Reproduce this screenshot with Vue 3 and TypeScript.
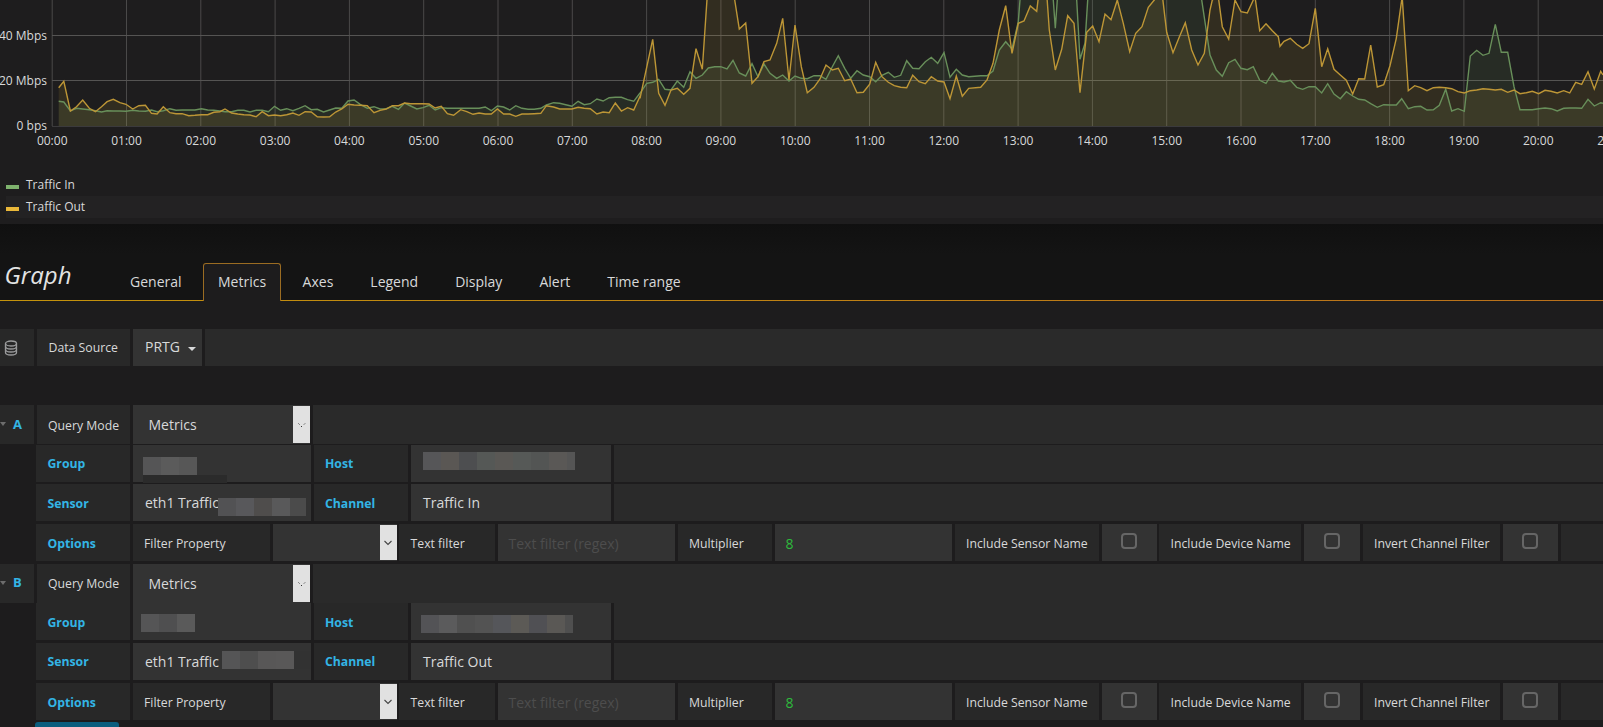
<script setup lang="ts">
type Pt = [number, number]

function parse(src: string, x0: number, sx: number, from: number, to: number): Pt[] {
  return src
    .trim()
    .split(/\s+/)
    .map((p) => {
      const [x, y] = p.split(',').map(Number)
      return [x0 + x / sx, y / 3] as Pt
    })
    .filter((p) => p[0] >= from && p[0] < to)
}

const orangeSrc = [
  '115,263 125,244 138,333 150,320 162,300 175,325 187,335 199,320 210,305 222,298 235,308 247,313 260,327 272,317 285,316 297,340 308,342 320,320 333,338 345,341 357,341 370,347 382,346 395,344 407,344 419,337 431,335 441,327 454,339 466,342 478,344 490,345 502,350 514,335 526,347 538,345 550,347 562,344 574,339 586,346 598,335 610,336 622,350 634,351 646,350 658,336 670,327 682,313 694,315 706,316 720,317 733,338 745,331 757,327 769,317 781,317 793,309 805,311 817,311 829,311 841,312 853,324 865,319 877,341 889,346 903,329 915,335 927,343 939,339 951,342 963,342 975,327 987,342 999,342 1011,349 1023,342 1035,342 1047,341 1060,340 1071,317 1085,321 1097,327 1109,327 1121,327 1133,322 1145,325 1157,326 1170,342 1182,336 1194,338 1206,309 1218,333 1230,323 1242,330 1254,290',
  '0,295 38,118 56,280 75,316 93,270 112,265 131,283 150,265 168,146 187,208 205,-60 270,-60 284,0 298,87 317,69 336,250 354,230 372,185 390,180 410,130 428,55 447,240 465,75 484,200 502,278 522,262 540,237 558,195 577,210 595,205 614,242 632,237 651,278 670,277 689,253 707,187 726,230 745,247 763,257 782,262 800,263 818,226 837,245 856,251 874,230 893,243 912,246 930,296 949,228 967,289 986,265 1005,278 1020,265',
  '44,278 62,262 81,240 99,190 118,90 137,17 156,160 175,70 192,63 211,18 230,34 240,-50 260,-20 268,90 286,210 305,148 323,47 342,70 360,278 380,97 398,78 417,125 435,42 453,59 472,0 490,70 509,155 527,100 546,80 565,22 583,0 605,-30 620,97 639,158 657,113 676,68 695,150 714,195 733,160 750,30 757,0 775,-10 787,80 806,117 825,0 843,35 862,39 880,0 885,-10 899,92 918,71 937,92 955,110 974,125 992,115 1011,133',
  '0,139 12,124 31,115 50,133 68,145 87,131 106,25 125,200 143,146 162,208 181,225 199,241 218,282 236,236 254,237 272,135 292,261 311,254 330,197 349,115 365,0 367,-5 385,272 404,257 422,263 441,272 460,263 478,262 497,263 515,266 534,275 553,279 571,272 590,270 609,266 627,268 646,270 664,268 683,277 702,270 720,281 739,278 757,274 776,281 795,271 813,274 832,279 851,272 869,279 887,247 905,253 924,215 943,267 962,214 969,225'
]

const greenSrc = [
  '115,304 125,306 138,333 150,325 162,327 175,329 187,332 199,336 210,332 222,333 235,333 247,334 260,331 272,333 285,334 297,330 308,335 320,332 333,326 345,331 357,330 370,330 382,330 395,326 407,330 419,331 431,333 441,335 454,335 466,331 478,331 490,336 502,331 514,331 526,335 538,319 550,331 562,326 574,332 586,325 598,317 610,329 622,328 634,336 646,330 658,324 670,325 682,303 694,300 706,313 720,325 733,320 745,327 757,326 769,319 781,328 793,309 805,318 817,327 829,323 841,316 853,330 865,323 877,325 889,325 903,325 915,325 927,325 939,325 951,321 963,332 975,318 987,321 999,330 1011,317 1023,325 1035,328 1047,328 1060,325 1071,315 1085,308 1097,310 1109,314 1121,319 1133,304 1145,314 1157,311 1170,297 1182,303 1194,293 1206,292 1218,292 1230,299 1242,304 1254,280',
  '0,280 20,250 38,247 56,238 75,268 93,270 112,243 131,262 150,215 168,235 187,225 205,204 224,200 242,200 261,207 279,181 298,219 317,228 336,191 354,230 372,192 390,220 410,235 428,225 447,243 465,228 484,235 502,236 522,227 540,227 558,238 577,200 595,167 614,205 632,235 651,212 670,225 689,230 707,245 726,226 745,217 763,232 782,226 800,182 818,205 837,206 856,185 874,172 893,190 912,158 930,232 949,208 967,225 986,230 1005,228 1020,227',
  '44,227 62,227 81,227 99,213 118,150 137,125 156,147 175,65 180,0 184,-40 270,-40 280,0 286,85 292,0 296,-30 340,-30 350,0 360,178 375,130 383,0 386,-30 720,-30 725,0 740,100 750,165 769,210 787,229 806,188 825,178 843,205 862,209 880,200 899,241 918,250 937,220 955,243 974,246 992,241 1011,261',
  '0,244 12,246 31,241 50,262 68,268 87,260 106,260 125,279 143,251 162,282 181,296 199,275 218,288 236,298 254,300 272,311 292,322 311,314 330,315 349,315 365,296 385,326 404,320 422,319 441,330 460,329 478,316 497,268 515,333 534,326 553,334 571,168 590,151 609,166 627,160 646,73 664,157 683,157 702,260 720,329 739,329 757,329 776,326 795,324 813,326 832,333 851,325 869,324 887,324 905,325 924,298 943,318 962,308 969,310'
]

const segs: [number, number, number, number][] = [
  [0, 1.96, 0, 640],
  [640, 3, 640, 975],
  [960, 3, 975, 1280],
  [1280, 3, 1280, 1700]
]

function build(src: string[]): Pt[] {
  return src.flatMap((s, i) => parse(s, segs[i][0], segs[i][1], segs[i][2], segs[i][3]))
}

function line(pts: Pt[]): string {
  return pts.map((p) => `${p[0].toFixed(1)},${p[1].toFixed(1)}`).join(' ')
}

function area(pts: Pt[]): string {
  const first = pts[0][0].toFixed(1)
  const last = pts[pts.length - 1][0].toFixed(1)
  return `${first},126 ${line(pts)} ${last},126`
}

const baseY = 126
const green = build(greenSrc)
const orange = build(orangeSrc)

const hours = Array.from({ length: 22 }, (_, h) => ({
  x: 52.2 + 74.3 * h,
  label: `${String(h).padStart(2, '0')}:00`
}))

const yTicks = [
  { y: 35.5, label: '40 Mbps' },
  { y: 80.5, label: '20 Mbps' },
  { y: 126, label: '0 bps' }
]

const tabs = ['General', 'Metrics', 'Axes', 'Legend', 'Display', 'Alert', 'Time range']

interface Blur {
  left: number
  top: number
  width: number
  colors: string[]
}

interface Query {
  letter: string
  group: Blur
  host: Blur
  sensor: Blur
  channel: string
  strip: boolean
}

const queries: Query[] = [
  {
    letter: 'A',
    strip: true,
    channel: 'Traffic In',
    group: { left: 10, top: 12, width: 54, colors: ['#555556', '#5b5b5b', '#575757'] },
    host: {
      left: 12,
      top: 7,
      width: 152,
      colors: ['#565658', '#5a5754', '#4d4e50', '#555856', '#5a5855', '#565957', '#535554', '#5a5856', '#555']
    },
    sensor: { left: 85, top: 14, width: 88, colors: ['#525254', '#58585b', '#4f4d4c', '#59595a', '#4b4b4b'] }
  },
  {
    letter: 'B',
    strip: false,
    channel: 'Traffic Out',
    group: { left: 8, top: 11, width: 54, colors: ['#555556', '#4f4f50', '#5a5a5a'] },
    host: {
      left: 10,
      top: 12,
      width: 152,
      colors: ['#535356', '#5b5b5c', '#505050', '#535353', '#55565a', '#5c5a56', '#505054', '#5a5855', '#4f4f4f']
    },
    sensor: { left: 89, top: 8, width: 89, colors: ['#555556', '#4e4e4e', '#585757', '#595858', '#323232'] }
  }
]

function at(b: Blur) {
  return { left: `${b.left}px`, top: `${b.top}px`, width: `${b.width}px` }
}
</script>

<template>
  <div class="page">
    <section class="panel">
      <svg class="chart" width="1603" height="150" viewBox="0 0 1603 150">
        <line
          v-for="h in hours"
          :key="h.label"
          :x1="h.x"
          :x2="h.x"
          y1="0"
          :y2="baseY"
          class="grid-v"
        />
        <line x1="52" x2="1603" y1="35.5" y2="35.5" class="grid-h" />
        <line x1="52" x2="1603" y1="80.5" y2="80.5" class="grid-h" />
        <polygon :points="area(green)" class="fill-green" />
        <polygon :points="area(orange)" class="fill-orange" />
        <polyline :points="line(green)" class="line-green" />
        <polyline :points="line(orange)" class="line-orange" />
        <line x1="52" x2="1603" y1="126.5" y2="126.5" class="axis" />
        <text v-for="t in yTicks" :key="t.label" x="47" :y="t.y + 4" text-anchor="end" class="tick">{{ t.label }}</text>
        <text v-for="h in hours" :key="h.label + 't'" :x="h.x" y="145" text-anchor="middle" class="tick">{{ h.label }}</text>
      </svg>
      <div class="legend">
        <div class="legend-row">
          <span class="swatch swatch-green"></span>
          <span class="legend-name">Traffic In</span>
        </div>
        <div class="legend-row legend-alt">
          <span class="swatch swatch-orange"></span>
          <span class="legend-name">Traffic Out</span>
        </div>
      </div>
    </section>

    <header class="edit-head">
      <h2 class="title">Graph</h2>
      <nav class="tabs">
        <a v-for="t in tabs" :key="t" class="tab" :class="{ active: t === 'Metrics' }">{{ t }}</a>
      </nav>
    </header>

    <main class="editor">
      <div class="row row-ds">
        <div class="cell icon-cell">
          <svg width="14" height="16" viewBox="0 0 14 16" class="db">
            <ellipse cx="7" cy="3.500" rx="5.500" ry="2.500" />
            <path d="M1.500 3.500v9c0 1.400 2.500 2.500 5.500 2.500s5.500-1.100 5.500-2.500v-9" />
            <path d="M1.500 6.500c0 1.400 2.500 2.500 5.500 2.500s5.500-1.100 5.500-2.500" />
            <path d="M1.500 9.500c0 1.400 2.500 2.500 5.500 2.500s5.500-1.100 5.500-2.500" />
          </svg>
        </div>
        <div class="cell label plain">Data Source</div>
        <div class="cell input prtg">PRTG<span class="caret"></span></div>
        <div class="cell filler"></div>
      </div>

      <div v-for="q in queries" :key="q.letter" class="query">
        <div class="row row-query">
          <div class="cell letter-cell">
            <span class="collapse"></span>
            <span class="letter">{{ q.letter }}</span>
          </div>
          <div class="cell label">Query Mode</div>
          <div class="cell input select mode">
            <span>Metrics</span>
            <span class="sel-btn">
              <svg width="10" height="8" viewBox="0 0 10 8">
                <path d="M1.500 2.500l1 1M4 5l1 1M8 2.500l-1 1" class="chev" />
              </svg>
            </span>
          </div>
          <div class="cell filler"></div>
        </div>

        <div class="row row-target">
          <div class="cell label key">Group</div>
          <div class="cell input value">
            <span class="blur" :style="at(q.group)">
              <i v-for="(c, i) in q.group.colors" :key="i" :style="{ background: c }"></i>
            </span>
            <span v-if="q.strip" class="strip"></span>
          </div>
          <div class="cell label key">Host</div>
          <div class="cell input value">
            <span class="blur" :style="at(q.host)">
              <i v-for="(c, i) in q.host.colors" :key="i" :style="{ background: c }"></i>
            </span>
          </div>
          <div class="cell filler"></div>
        </div>

        <div class="row row-target">
          <div class="cell label key">Sensor</div>
          <div class="cell input value">
            eth1 Traffic
            <span class="blur" :style="at(q.sensor)">
              <i v-for="(c, i) in q.sensor.colors" :key="i" :style="{ background: c }"></i>
            </span>
          </div>
          <div class="cell label key">Channel</div>
          <div class="cell input value">{{ q.channel }}</div>
          <div class="cell filler"></div>
        </div>

        <div class="row row-options">
          <div class="cell label key">Options</div>
          <div class="cell label">Filter Property</div>
          <div class="cell input select">
            <span></span>
            <span class="sel-btn">
              <svg width="10" height="8" viewBox="0 0 10 8">
                <path d="M1.500 2l3.500 3.500 3.500-3.500" class="chev-full" />
              </svg>
            </span>
          </div>
          <div class="cell label">Text filter</div>
          <div class="cell input placeholder">Text filter (regex)</div>
          <div class="cell label">Multiplier</div>
          <div class="cell input number">8</div>
          <div class="cell label">Include Sensor Name</div>
          <div class="cell check"><span class="box"></span></div>
          <div class="cell label">Include Device Name</div>
          <div class="cell check"><span class="box"></span></div>
          <div class="cell label">Invert Channel Filter</div>
          <div class="cell check"><span class="box"></span></div>
          <div class="cell label"></div>
        </div>
      </div>

      <div class="add-btn"></div>
    </main>
  </div>
</template>

<style scoped>
.page {
  width: 1603px;
  height: 727px;
  overflow: hidden;
  background: #1d1c1d;
  font-family: "Open Sans", "Liberation Sans", sans-serif;
  color: #d8d9da;
}

.panel {
  height: 224px;
  background: #1e1d1e;
  box-sizing: border-box;
}

.chart {
  display: block;
}

.grid-v {
  stroke: #4a4949;
  stroke-width: 1;
}

.grid-h {
  stroke: #555453;
  stroke-width: 1;
}

.axis {
  stroke: #3b3a3c;
  stroke-width: 1;
}

.fill-green {
  fill: #7eb26d;
  fill-opacity: 0.1;
}

.fill-orange {
  fill: #eab839;
  fill-opacity: 0.1;
}

.line-green,
.line-orange {
  fill: none;
  stroke-width: 1.400;
}

.line-green {
  stroke: #688f5a;
}

.line-orange {
  stroke: #bd9636;
}

.tick {
  font-family: "Open Sans", "Liberation Sans", sans-serif;
  font-size: 12px;
  fill: #d8d9da;
}

.legend {
  margin-top: 24px;
  margin-left: 6px;
  font-size: 12px;
}

.legend-row {
  display: flex;
  align-items: center;
  height: 22px;
}

.legend-name {
  padding-bottom: 1px;
}

.legend-alt {
  background: #232223;
}

.swatch {
  width: 13px;
  height: 4px;
  margin-right: 7px;
  margin-top: 3px;
}

.swatch-green {
  background: #7eb26d;
}

.swatch-orange {
  background: #eab839;
}

.edit-head {
  height: 77px;
  box-sizing: border-box;
  display: flex;
  align-items: flex-end;
  background: linear-gradient(180deg, #101010, #141414 40%);
  border-bottom: 1px solid #b98a10;
  border-image: linear-gradient(90deg, #c4930c, #b9701c) 1;
}

.title {
  width: 114.500px;
  flex: none;
  box-sizing: border-box;
  margin: 0 0 9px;
  padding-left: 4.500px;
  font-size: 24px;
  line-height: 32px;
  font-weight: 400;
  font-style: italic;
  color: #e3e4e4;
}

.tabs {
  display: flex;
  gap: 6px;
  margin-bottom: -1px;
}

.tab {
  box-sizing: border-box;
  height: 38px;
  padding: 0 14.500px 3px;
  display: flex;
  align-items: center;
  font-size: 14px;
  color: #d8d9da;
  border: 1px solid transparent;
  border-bottom: 0;
  border-radius: 3px 3px 0 0;
}

.tab.active {
  background: #1d1c1d;
  border-color: #9b6c22;
  padding: 0 14px 2px;
}

.editor {
  padding-top: 28px;
}

.row {
  display: grid;
  height: 37px;
  column-gap: 2.500px;
  margin-bottom: 2.670px;
}

.row-ds {
  grid-template-columns: 34px 93px 69px 1fr;
  column-gap: 3px;
  margin-bottom: 39px;
}

.row-query {
  grid-template-columns: 34px 93.500px 177.500px 1fr;
}

.row-target {
  padding-left: 36px;
  grid-template-columns: 94px 178.500px 94.500px 200.500px 1fr;
}

.row-options {
  padding-left: 36px;
  grid-template-columns: 94px 137.500px 124px 96px 177.500px 94.500px 177.500px 144.500px 55px 142px 56.500px 137.500px 55.500px 1fr;
}

.cell {
  display: flex;
  align-items: center;
  position: relative;
  box-sizing: border-box;
  background: #282828;
  white-space: nowrap;
  min-width: 0;
}

.label {
  padding-left: 11.500px;
  padding-top: 1px;
  font-size: 12.250px;
}

.plain {
  padding-top: 0;
}

.row-options .label {
  padding-top: 3px;
}

.row-options .placeholder,
.row-options .number {
  padding-top: 2px;
}

.key {
  color: #33b5e5;
  font-weight: 700;
}

.filler {
  background: #2a2a2a;
}

.input {
  background: #333333;
  font-size: 14px;
  padding-left: 12px;
}

.value {
  padding-left: 12.500px;
}

.prtg {
  padding-bottom: 2px;
}

.caret {
  width: 0;
  height: 0;
  margin-left: 8px;
  margin-top: 4px;
  border-left: 4px solid transparent;
  border-right: 4px solid transparent;
  border-top: 4px solid #d8d9da;
}

.icon-cell {
  padding-left: 4px;
}

.db {
  fill: none;
  stroke: #9a9b9c;
  stroke-width: 1.300;
}

.collapse {
  width: 0;
  height: 0;
  margin-right: 7px;
  margin-bottom: 1px;
  border-left: 3.500px solid transparent;
  border-right: 3.500px solid transparent;
  border-top: 4px solid #6d6d6d;
}

.letter {
  color: #33b5e5;
  font-size: 13px;
  font-weight: 700;
  margin-bottom: 2px;
}

.select {
  padding: 0;
  justify-content: space-between;
  align-items: stretch;
}

.mode > span:first-child {
  padding-left: 16px;
  line-height: 39px;
}

.sel-btn {
  width: 17px;
  margin: 1px 0;
  padding-top: 1px;
  background: #e1e1e1;
  display: flex;
  align-items: center;
  justify-content: center;
}

.chev {
  fill: none;
  stroke: #333;
  stroke-width: 1;
}

.chev-full {
  fill: none;
  stroke: #444;
  stroke-width: 1.100;
}

.placeholder {
  color: #4d4d4d;
  padding-left: 11px;
}

.number {
  color: #2dbb3c;
  padding-left: 11px;
}

.check {
  background: #333333;
  justify-content: center;
  padding-bottom: 2px;
}

.box {
  width: 16px;
  height: 16px;
  box-sizing: border-box;
  border: 2px solid #666666;
  border-radius: 4px;
}

.blur {
  position: absolute;
  display: flex;
  height: 18px;
  overflow: hidden;
}

.blur i {
  display: block;
  flex: none;
  width: 18px;
  height: 18px;
}

.strip {
  position: absolute;
  left: 10px;
  top: 30px;
  width: 84px;
  height: 8px;
  background: #2b2b2b;
}

.add-btn {
  width: 84px;
  height: 5px;
  margin-left: 35px;
  background: #0a5d7e;
  border-radius: 3px 3px 0 0;
}
</style>

<style>
html,
body {
  margin: 0;
  background: #1d1c1d;
  overflow: hidden;
}
</style>
